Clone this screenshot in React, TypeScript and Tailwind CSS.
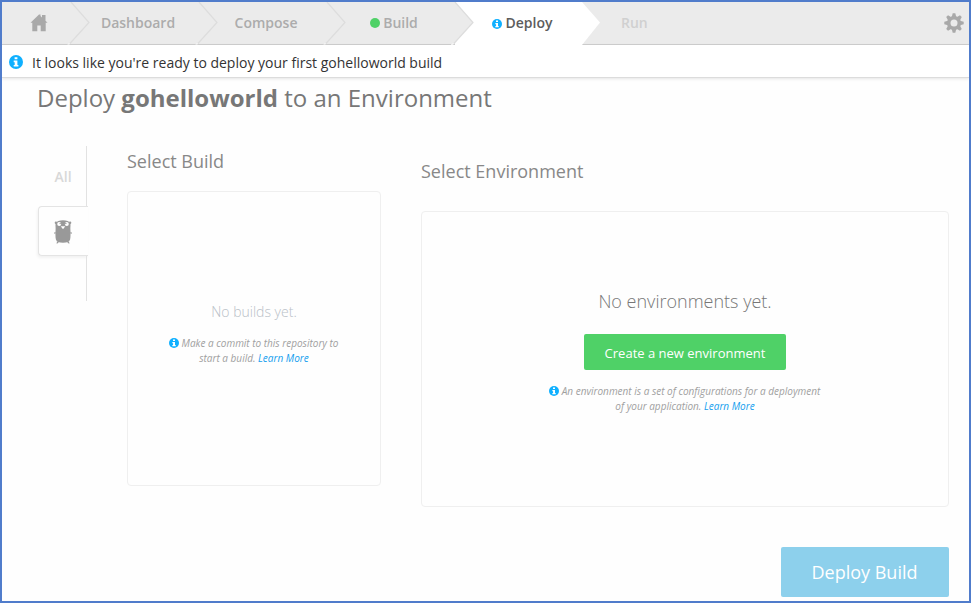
import React from "react";

function InfoIcon({ className }: { className: string }) {
  return (
    <svg viewBox="0 0 14 14" className={className} aria-hidden="true">
      <circle cx="7" cy="7" r="7" fill="#0fb0ff" />
      <path d="M5.6 2.2h2.8v2.1H5.6zM4.7 5.5h3.7v4.400h1v1.700H4.7V9.900h1V7.200h-1z" fill="#fff" />
    </svg>
  );
}

function HomeIcon() {
  return (
    <svg viewBox="0 0 18 18" className="h-[18px] w-[18px]" aria-hidden="true">
      <path d="M9 0.500L0.500 8.700H2.300V17.300H7.300V11.500H10.700V17.300H15.700V8.700H17.500L15.500 6.700V1H12V3.400L10.500 2V0.500Z" fill="#a9a9a9" />
    </svg>
  );
}

function GearIcon() {
  return (
    <svg viewBox="-10 -10 20 20" className="h-5 w-5" aria-hidden="true">
      <g fill="#a9a9a9">
        {[0, 45, 90, 135].map((a) => (
          <path key={a} transform={`rotate(${a})`} d="M-2.300 -6L-1.300 -9.700H1.300L2.300 -6V6L1.300 9.700H-1.300L-2.300 6Z" />
        ))}
        <circle r="7" />
      </g>
      <circle r="3.500" fill="#ebebeb" />
    </svg>
  );
}

function GopherIcon() {
  return (
    <svg viewBox="0 0 18 24" className="h-6 w-[18px]" aria-hidden="true">
      <g fill="#999">
        <path d="M1.600 3.500C2.500 1.200 5.500 .2 9 .2s6.500 1 7.400 3.300c.3 2-.2 4 0 6.200.2 2.800.3 7.600-.3 9.800-.6 2.200-3 3.300-7.100 3.300s-6.500-1.100-7.100-3.300c-.6-2.200-.5-7-.3-9.800.2-2.200-.3-4.200 0-6.200z" />
        <circle cx="1.900" cy="2.800" r="1.200" />
        <circle cx="16.100" cy="2.800" r="1.200" />
        <path d="M1.500 12L.2 12.500v1.200l1.500-.2zM16.500 12l1.300.5v1.200l-1.500-.2zM3 21l-.4 2.800 2.200-1zM15 21l.4 2.800-2.200-1z" />
      </g>
      <circle cx="5.200" cy="3.900" r="2" fill="#fff" />
      <circle cx="12.800" cy="3.900" r="2" fill="#fff" />
      <circle cx="6.200" cy="3.500" r=".7" fill="#999" />
      <circle cx="11.800" cy="3.500" r=".7" fill="#999" />
      <path d="M6.800 6.200h4.400L9.500 8.800h-1z" fill="#fff" />
    </svg>
  );
}

function Chevron({ fill = "none" }: { fill?: string }) {
  return (
    <svg viewBox="0 0 24 43" className="absolute top-0 -left-[4px] h-[43px] w-6" aria-hidden="true">
      <path d="M0 0H4L22 20.500L1.500 43H0Z" fill={fill} />
      <path d="M4 0L22 20.500L2 42.500" fill="none" stroke="#dddddd" strokeWidth="1.200" />
      <path d="M2.500 41L1 42.700" stroke="#fff" strokeWidth="1" />
    </svg>
  );
}

const step = "relative flex h-[43px] w-32 shrink-0 items-center justify-center pl-1.5 pb-px";

export default function App() {
  return (
    <div className="flex h-[603px] w-[971px] flex-col overflow-hidden border-2 border-[#507ccb] bg-[#fefefe] font-['Open_Sans','Noto_Sans',sans-serif]">
      <nav className="flex h-[43px] shrink-0 border-b border-[#cfcfcf] bg-[#ebebeb] text-sm font-semibold text-[#acacac]">
        <div className="flex w-[69px] items-center pl-[27.5px]">
          <HomeIcon />
        </div>
        <div className={step}><Chevron />Dashboard</div>
        <div className={step}><Chevron />Compose</div>
        <div className={step}>
          <Chevron />
          <span className="mr-[3px] h-2.5 w-2.5 rounded-full bg-[#4fd167]" />Build
        </div>
        <div className="relative flex h-[43px] w-[127px] shrink-0 items-center justify-center bg-white pb-px pl-[7px] text-[#5c5c5c]">
          <Chevron fill="#ebebeb" />
          <InfoIcon className="mt-0.5 mr-1 h-2.5 w-2.5" />Deploy
        </div>
        <div className="relative flex h-[43px] items-center pb-px pl-[39px] text-[#d0d0d0]">
          <svg viewBox="0 0 18 43" className="absolute top-0 left-0 h-[43px] w-[18px]" aria-hidden="true">
            <path d="M0 0L18 20.500L0 43Z" fill="#fff" />
          </svg>
          Run
        </div>
        <div className="ml-auto flex items-center pr-[5px]">
          <GearIcon />
        </div>
      </nav>
      <div className="flex h-[33px] shrink-0 items-center border-b border-[#dcdcdc] bg-white pl-[7px] text-sm text-[#333] shadow-[0_1px_3px_rgba(0,0,0,0.1)]">
        <InfoIcon className="mt-px mr-[9px] h-3.5 w-3.5" />
        <span className="pt-1">It looks like you're ready to deploy your first gohelloworld build</span>
      </div>
      <main className="flex flex-1 flex-col pr-5 pl-[35px]">
        <h1 className="mt-1 h-8 text-2xl leading-8 text-[#777]">
          Deploy <b>gohelloworld</b> to an Environment
        </h1>
        <div className="mt-8 flex">
          <aside className="h-[155px] w-[50px] shrink-0">
            <div className="flex h-[60px] w-[50px] items-center justify-center border-r border-[#e2e2e2] pt-0.5 pl-[3px] text-sm font-semibold text-[#d8d8d8]">All</div>
            <div className="ml-px flex h-[50px] w-[50px] items-center justify-center rounded-l border border-r-0 border-[#e4e4e4] bg-[#fefefe] pt-px pr-px shadow-[-1px_2px_3px_rgba(0,0,0,0.05)]">
              <GopherIcon />
            </div>
            <div className="h-[45px] w-[50px] border-r border-[#e2e2e2]" />
          </aside>
          <section className="ml-[39px] w-[256px] shrink-0">
            <h2 className="ml-px h-[45px] pt-[3px] text-lg leading-6 text-[#888]">Select Build</h2>
            <div className="ml-px flex h-[295px] w-[254px] flex-col items-center rounded border border-[#efefef] pt-[108px] text-center">
              <p className="text-sm leading-6 font-light text-[#b9c0c7]">No builds yet.</p>
              <p className="mt-3 text-[10px] leading-[15px] text-[#a0a0a0] italic">
                <InfoIcon className="mr-[3px] -ml-px mb-0.5 inline-block h-2.5 w-2.5" />
                Make a commit to this repository to<br />start a build. <a className="text-[#159fee]">Learn More</a>
              </p>
            </div>
          </section>
          <section className="ml-[39px] w-[528px] shrink-0">
            <h2 className="h-[65px] pt-[13px] text-lg leading-6 text-[#888]">Select Environment</h2>
            <div className="flex h-[296px] w-[528px] flex-col items-center rounded border border-[#efefef] pt-[77px] text-center">
              <p className="text-lg leading-6 font-light text-[#777]">No environments yet.</p>
              <button className="mt-[21px] h-9 w-[202px] rounded-[2px] bg-[#4fd167] pt-1 text-[13px] text-white">Create a new environment</button>
              <p className="mt-3.5 text-[10px] leading-[15px] text-[#a0a0a0] italic">
                <InfoIcon className="mr-[3px] -ml-px mb-0.5 inline-block h-2.5 w-2.5" />
                An environment is a set of configurations for a deployment<br />of your application. <a className="text-[#159fee]">Learn More</a>
              </p>
            </div>
          </section>
        </div>
        <button className="mt-10 h-[50px] w-[168px] self-end rounded-[2px] bg-[#8dd0ec] pr-px text-lg text-white">Deploy Build</button>
      </main>
    </div>
  );
}
